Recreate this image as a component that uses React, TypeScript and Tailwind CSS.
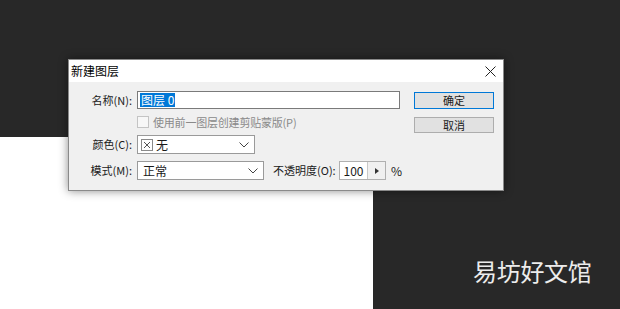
import React from "react";

const font = { fontFamily: '"Noto Sans CJK SC", "Noto Sans", sans-serif' };

function Chevron() {
  return (
    <svg width="10" height="6" viewBox="0 0 10 6" className="shrink-0">
      <path d="M0.5 0.5 L5 5 L9.5 0.5" fill="none" stroke="#444" strokeWidth="1" />
    </svg>
  );
}

export default function App() {
  return (
    <div className="relative w-[620px] h-[309px] overflow-hidden bg-[#282828]" style={font}>
      <div className="flex flex-col h-full">
        <div className="h-[137px] shrink-0" />
        <div className="flex flex-1">
          <div className="w-[373px] bg-white" />
          <div className="flex-1 bg-[#282828]" />
        </div>
      </div>

      {/* dialog window */}
      <div className="absolute left-[68px] top-[59px] w-[436px] h-[132px] flex flex-col border border-[#8a8a8a] bg-[#f0f0f0] shadow-[0_0_9px_rgba(0,0,0,0.45)]">
        <div className="h-[22px] bg-white flex items-center justify-between pl-[2px] pr-[7px] shrink-0">
          <span className="text-[12px] leading-none text-black">新建图层</span>
          <svg width="11" height="11" viewBox="0 0 11 11">
            <path d="M0.5 0.5 L10.5 10.5 M10.5 0.5 L0.5 10.5" stroke="#222" strokeWidth="1" />
          </svg>
        </div>
        <div className="flex flex-1 text-[11px] leading-none text-[#1a1a1a]">
          <div className="w-[345px] pt-[9px] flex flex-col">
            {/* name row */}
            <div className="flex items-center h-[18px]">
              <span className="w-[64px] text-right pr-[1px]">名称(N):</span>
              <div className="ml-[4px] w-[263px] h-[18px] bg-white border border-[#7a7a7a] flex items-center pl-[2px]">
                <span className="bg-[#0078d7] text-white px-[1px] h-[14px] flex items-center text-[12px]">图层 0</span>
              </div>
            </div>
            {/* checkbox row */}
            <div className="flex items-center h-[18px] mt-[4px]">
              <div className="w-[68px]" />
              <div className="w-[12px] h-[12px] border border-[#c4c4c4] bg-[#f7f7f7]" />
              <span className="ml-[4px] text-[#8a8a8a] tracking-[-0.2px]">使用前一图层创建剪贴蒙版(P)</span>
            </div>
            {/* color row */}
            <div className="flex items-center h-[19px] mt-[4px]">
              <span className="w-[64px] text-right pr-[1px]">颜色(C):</span>
              <div className="ml-[4px] w-[118px] h-[19px] bg-white border border-[#9a9a9a] flex items-center pl-[3px] pr-[5px]">
                <div className="w-[12px] h-[12px] border border-[#8a8a8a] flex items-center justify-center">
                  <svg width="8" height="8" viewBox="0 0 8 8">
                    <path d="M1 1 L7 7 M7 1 L1 7" stroke="#555" strokeWidth="1" />
                  </svg>
                </div>
                <span className="ml-[3px] flex-1 text-[12px]">无</span>
                <Chevron />
              </div>
            </div>
            {/* mode row */}
            <div className="flex items-center h-[19px] mt-[7px]">
              <span className="w-[64px] text-right pr-[1px]">模式(M):</span>
              <div className="ml-[4px] w-[127px] h-[19px] bg-white border border-[#9a9a9a] flex items-center pl-[5px] pr-[5px]">
                <span className="flex-1 text-[12px]">正常</span>
                <Chevron />
              </div>
              <span className="ml-[9px] w-[62px] whitespace-nowrap">不透明度(O):</span>
              <div className="ml-[4px] h-[19px] flex border border-[#b0b0b0] bg-white">
                <div className="w-[27px] flex items-center justify-center text-[12px]">100</div>
                <div className="w-[18px] border-l border-[#c8c8c8] bg-[#f0f0f0] flex items-center justify-center">
                  <svg width="4" height="6" viewBox="0 0 4 6">
                    <path d="M0 0 L4 3 L0 6 Z" fill="#333" />
                  </svg>
                </div>
              </div>
              <span className="ml-[5px] text-[12px]">%</span>
            </div>
          </div>
          <div className="pt-[10px] flex flex-col gap-[8px]">
            <div className="w-[80px] h-[17px] border border-[#0078d7] bg-[#e1e1e1] flex items-center justify-center">
              确定
            </div>
            <div className="w-[80px] h-[16px] border border-[#adadad] bg-[#e1e1e1] flex items-center justify-center">
              取消
            </div>
          </div>
        </div>
      </div>

      {/* watermark */}
      <div className="absolute left-[473px] top-[259px] text-[24px] leading-none text-[#ececec] tracking-[-0.3px]">
        易坊好文馆
      </div>
    </div>
  );
}
